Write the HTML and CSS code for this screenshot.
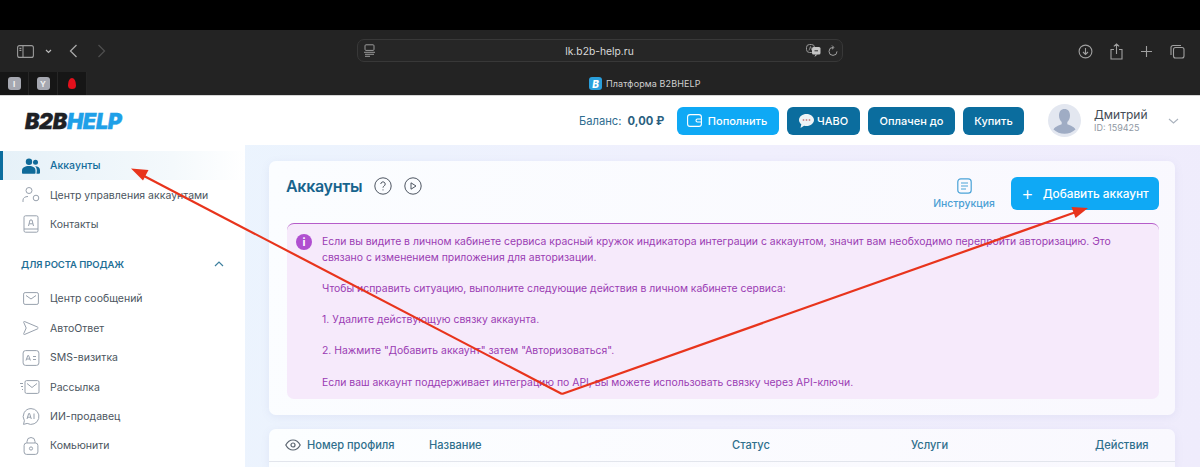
FILE: index.html
```html
<!DOCTYPE html>
<html lang="ru">
<head>
<meta charset="utf-8">
<title>Платформа B2BHELP</title>
<link rel="stylesheet" href="styles.css">
</head>
<body>
<div class="page">
  <div class="notch"></div>
  <div class="browser">
    <div class="toolbar">
      <div class="tool-left">
        <svg class="ic-side" width="17" height="13" viewBox="0 0 17 13" fill="none" stroke="#9a9a9a" stroke-width="1.1"><rect x=".6" y=".6" width="15.8" height="11.8" rx="2"/><path d="M6 .6v11.8M2.4 3.4h2M2.4 5.4h2"/></svg>
        <svg class="ic-down" width="7" height="5" viewBox="0 0 7 5" fill="none" stroke="#bbb" stroke-width="1.2"><path d="M1 1l2.5 2.5L6 1"/></svg>
        <svg class="ic-back" width="9" height="14" viewBox="0 0 9 14" fill="none" stroke="#a8a8a8" stroke-width="1.3"><path d="M7.5 1L1.5 7l6 6"/></svg>
        <svg class="ic-fwd" width="9" height="14" viewBox="0 0 9 14" fill="none" stroke="#4e4e4e" stroke-width="1.3"><path d="M1.5 1l6 6-6 6"/></svg>
      </div>
      <div class="urlbar">
        <svg width="11" height="13" viewBox="0 0 11 13" fill="none" stroke="#999" stroke-width="1"><rect x="1" y=".8" width="9" height="5.6" rx="1"/><path d="M0 8.3h11M1 10.3h9M1 12.3h5"/></svg>
        <span class="url">lk.b2b-help.ru</span>
        <svg width="15" height="13" viewBox="0 0 15 13"><rect x=".5" y=".5" width="8" height="8" rx="3" fill="none" stroke="#999"/><path d="M3 6.500L4.500 2.500 6 6.500" fill="none" stroke="#999" stroke-width=".8"/><rect x="6" y="3" width="8.500" height="7.500" rx="1.500" fill="#c4c4c4"/><path d="M8.500 13l1-2.500h2z" fill="#c4c4c4"/><path d="M8.500 6.800h3.500" stroke="#333" stroke-width="1"/></svg>
        <svg class="ic-reload" width="10" height="12" viewBox="0 0 10 12" fill="none" stroke="#a0a0a0" stroke-width="1"><path d="M5 2.400a4 4 0 1 0 4 4"/><path d="M4 .5l2 2-2 1.700"/></svg>
      </div>
      <div class="tool-right">
        <svg width="15" height="15" viewBox="0 0 15 15" fill="none" stroke="#a0a0a0" stroke-width="1.1"><circle cx="7.5" cy="7.5" r="6.4"/><path d="M7.5 4v6.5M5 8l2.500 2.500L10 8"/></svg>
        <svg width="13" height="17" viewBox="0 0 13 17" fill="none" stroke="#a0a0a0" stroke-width="1.1"><path d="M6.500 1v10M3.800 3.400L6.500 1l2.700 2.400M4 6.500H1v9.500h11V6.500H9"/></svg>
        <svg width="13" height="13" viewBox="0 0 13 13" fill="none" stroke="#a0a0a0" stroke-width="1.1"><path d="M6.500 1v11M1 6.500h11"/></svg>
        <svg width="15" height="15" viewBox="0 0 15 15" fill="none" stroke="#a0a0a0" stroke-width="1.1"><rect x="3.500" y="3.500" width="10.500" height="10.500" rx="2"/><path d="M11 1.500H3a2 2 0 0 0-2 2V11"/></svg>
      </div>
    </div>
    <div class="tabs">
      <div class="pins">
        <div class="pin"><span class="fav">I</span></div>
        <div class="pin"><span class="fav">Y</span></div>
        <div class="pin"><span class="drop"></span></div>
      </div>
      <div class="tab-title"><span class="tab-b">B</span><span>Платформа B2BHELP</span></div>
    </div>
  </div>

  <header class="header">
    <div class="logo">B2B<span>HELP</span></div>
    <div class="balance">Баланс: <b>0,00 ₽</b></div>
    <button class="btn btn-light">
      <svg width="15" height="13" viewBox="0 0 15 13" fill="none" stroke="#fff" stroke-width="1.1"><rect x=".6" y=".6" width="13.800" height="11.800" rx="2.500"/><path d="M14 5h-3.500a1.500 1.500 0 0 0 0 3H14"/></svg>
      Пополнить
    </button>
    <button class="btn btn-dark">
      <svg width="15" height="14" viewBox="0 0 15 14"><path d="M7.500 0C3.400 0 0 2.600 0 6c0 1.700.9 3.200 2.300 4.300L1.500 14l3.600-2.300c.8.200 1.600.300 2.400.300 4.100 0 7.500-2.700 7.500-6S11.600 0 7.500 0z" fill="#eef3f6"/><circle cx="4.500" cy="6" r=".9" fill="#c98a8a"/><circle cx="7.500" cy="6" r=".9" fill="#c98a8a"/><circle cx="10.500" cy="6" r=".9" fill="#c98a8a"/></svg>
      ЧАВО
    </button>
    <button class="btn btn-dark">Оплачен до</button>
    <button class="btn btn-dark">Купить</button>
    <div class="avatar">
      <svg width="33" height="33" viewBox="0 0 33 33"><circle cx="16.500" cy="16.500" r="16.500" fill="#e3e7f0"/><path d="M16.500 5c-3.500 0-5.500 2.700-5.500 6.500 0 2.800 1.100 5.100 2.700 6.400v2.300c-3.500 1.500-7 2.500-8.200 5.300a16.500 16.500 0 0 0 22 0c-1.200-2.800-4.700-3.800-8.200-5.300v-2.300c1.600-1.300 2.700-3.600 2.700-6.400C22 7.700 20 5 16.500 5z" fill="#9facc4"/></svg>
    </div>
    <div class="user">
      <div class="user-name">Дмитрий</div>
      <div class="user-id">ID: 159425</div>
    </div>
    <svg class="user-chev" width="11" height="6" viewBox="0 0 11 6" fill="none" stroke="#aab2bd" stroke-width="1.1"><path d="M1 1l4.500 4L10 1"/></svg>
  </header>

  <div class="body">
    <aside class="sidebar">
      <nav class="nav">
        <a class="item active">
          <svg width="18" height="16" viewBox="0 0 18 16" fill="#0f6a99"><circle cx="7" cy="3.700" r="3.200"/><circle cx="13.500" cy="4.300" r="2.500"/><path d="M0 15v-2.500C0 9.500 3 8 7 8s6.500 1.500 6.500 4.500V15a.8.800 0 0 1-.8.800H.8A.8.800 0 0 1 0 15z"/><path d="M14.500 15.800H17a1 1 0 0 0 1-1V12c0-2.300-2-3.700-5-3.700 1.300 1 1.800 2.500 1.800 4.200z"/></svg>
          <span>Аккаунты</span>
        </a>
        <a class="item">
          <svg width="18" height="16" viewBox="0 0 18 16" fill="none" stroke="#98a1ad" stroke-width="1"><circle cx="7" cy="3.500" r="3"/><path d="M1 15v-2c0-2 2-3.500 5-3.500"/><circle cx="14" cy="11" r="2.800"/></svg>
          <span>Центр управления аккаунтами</span>
        </a>
        <a class="item">
          <svg width="16" height="18" viewBox="0 0 16 18" fill="none" stroke="#98a1ad" stroke-width="1"><rect x="1" y=".8" width="14" height="16.400" rx="1.500"/><path d="M1 14h14M5.500 11l1.500-6h2l1.500 6M6.200 8.800h3.600"/></svg>
          <span>Контакты</span>
        </a>
        <div class="section"><span>ДЛЯ РОСТА ПРОДАЖ</span>
          <svg width="10" height="6" viewBox="0 0 10 6" fill="none" stroke="#3d7f9e" stroke-width="1.200"><path d="M1 5l4-4 4 4"/></svg>
        </div>
        <a class="item">
          <svg width="16" height="13" viewBox="0 0 16 13" fill="none" stroke="#98a1ad" stroke-width="1"><rect x=".6" y=".6" width="14.800" height="11.800" rx="1.500"/><path d="M3 3.500l5 3.500 5-3.500"/></svg>
          <span>Центр сообщений</span>
        </a>
        <a class="item">
          <svg width="16" height="16" viewBox="0 0 16 16" fill="none" stroke="#98a1ad" stroke-width="1"><path d="M1.500 1.500l13 5.500c.8.400.8 1.500 0 1.900l-13 5.600c-.6.200-1-.300-.8-.8L3.200 8 .7 2.300c-.2-.5.200-1 .8-.8z"/></svg>
          <span>АвтоОтвет</span>
        </a>
        <a class="item">
          <svg width="17" height="16" viewBox="0 0 17 16" fill="none" stroke="#98a1ad" stroke-width="1"><rect x=".6" y=".6" width="15.800" height="14.800" rx="2.500"/><path d="M3.500 10.500L5.300 5.500h.8l1.800 5M4.200 9h3.400M10.500 6.500h3M10.500 9.500h3"/></svg>
          <span>SMS-визитка</span>
        </a>
        <a class="item item-mail">
          <svg width="20" height="14" viewBox="0 0 20 14" fill="none" stroke="#98a1ad" stroke-width="1"><rect x="5" y=".6" width="14" height="12.800" rx="1.500"/><path d="M7 3.500l5 4 5-4M0 3.500h3M1 6.500h2M2 9.500h1"/></svg>
          <span>Рассылка</span>
        </a>
        <a class="item">
          <svg width="17" height="17" viewBox="0 0 17 17" fill="none" stroke="#98a1ad" stroke-width="1"><path d="M8.500.6a7.900 7.900 0 1 1-3.800 14.800L1 16.400l.9-3.700A7.900 7.900 0 0 1 8.500.6z"/><path d="M4.500 11l1.700-5.500h.9L8.800 11M5.100 9.200h3.200M11.500 5.500V11"/></svg>
          <span>ИИ-продавец</span>
        </a>
        <a class="item">
          <svg width="15" height="18" viewBox="0 0 15 18" fill="none" stroke="#98a1ad" stroke-width="1"><rect x=".6" y="6" width="13.800" height="11.400" rx="2.500"/><path d="M3.500 6V4.500a4 4 0 0 1 8 0V6"/><circle cx="7.500" cy="11.500" r="1.600"/></svg>
          <span>Комьюнити</span>
        </a>
      </nav>
    </aside>

    <main class="main">
      <section class="card">
        <div class="card-top">
          <h1 class="title">Аккаунты</h1>
          <svg class="ic-q" width="18" height="18" viewBox="0 0 18 18" fill="none" stroke="#4d5561" stroke-width="1"><circle cx="9" cy="9" r="8.200"/><path d="M6.800 7a2.200 2.200 0 1 1 3.400 1.900c-.8.500-1.200.9-1.200 1.800M9 12.400v1"/></svg>
          <svg class="ic-p" width="18" height="18" viewBox="0 0 18 18" fill="none" stroke="#4d5561" stroke-width="1"><circle cx="9" cy="9" r="8.200"/><path d="M7 5.800l5 3.200-5 3.200z" stroke-linejoin="round"/></svg>
          <div class="guide">
            <svg width="15" height="16" viewBox="0 0 15 16" fill="none" stroke="#4ba3d8" stroke-width="1.200"><rect x=".8" y=".8" width="13.400" height="14.400" rx="3"/><path d="M4 5h7M4 8h7M4 11h5"/></svg>
            <span>Инструкция</span>
          </div>
          <button class="add"><span class="plus">+</span>Добавить аккаунт</button>
        </div>
        <div class="alert">
          <span class="alert-i">i</span>
          <div class="alert-text">
            <p>Если вы видите в личном кабинете сервиса красный кружок индикатора интеграции с аккаунтом, значит вам необходимо перепройти авторизацию. Это связано с изменением приложения для авторизации.</p>
            <p>Чтобы исправить ситуацию, выполните следующие действия в личном кабинете сервиса:</p>
            <p>1. Удалите действующую связку аккаунта.</p>
            <p>2. Нажмите "Добавить аккаунт" затем "Авторизоваться".</p>
            <p>Если ваш аккаунт поддерживает интеграцию по API, вы можете использовать связку через API-ключи.</p>
          </div>
        </div>
      </section>
      <section class="table-card">
        <div class="th-row">
          <svg width="16" height="12" viewBox="0 0 16 12" fill="none" stroke="#5a6470" stroke-width="1.200"><path d="M.8 6C2.500 2.800 5 1 8 1s5.500 1.800 7.200 5C13.500 9.200 11 11 8 11S2.500 9.200.8 6z"/><circle cx="8" cy="6" r="2"/></svg>
          <span class="th th-num">Номер профиля</span>
          <span class="th th-name">Название</span>
          <span class="th th-status">Статус</span>
          <span class="th th-serv">Услуги</span>
          <span class="th th-act">Действия</span>
        </div>
      </section>
    </main>
  </div>

  <svg class="arrows" width="1200" height="467" viewBox="0 0 1200 467" fill="#e8341c">
    <path d="M562 394L144 176" stroke="#e8341c" stroke-width="2.200" fill="none"/>
    <path d="M131 168.500l17.500 1.500-5.500 10.500z"/>
    <path d="M562 394L1076 212" stroke="#e8341c" stroke-width="2.200" fill="none"/>
    <path d="M1088 208l-12.500 10-4-11z"/>
  </svg>
</div>
</body>
</html>
```
FILE: styles.css
```css
* { box-sizing: border-box; }
html, body { margin: 0; padding: 0; }
body { width: 1200px; height: 467px; overflow: hidden; font-family: "Inter", "Noto Sans", sans-serif; background: #fff; }
.page { position: relative; width: 1200px; height: 467px; overflow: hidden; display: flex; flex-direction: column; }
.notch { height: 30px; background: #000; flex: none; }

.browser { height: 66px; background: #232323; flex: none; border-bottom: 1px solid #d5d5d5; display: flex; flex-direction: column; }
.toolbar { height: 42px; padding-top: 8px; display: flex; align-items: flex-start; flex: none; }
.tool-left { width: 357px; height: 26px; display: flex; align-items: center; padding-left: 17px; flex: none; }
.ic-down { margin-left: 11px; }
.ic-back { margin-left: 17px; }
.ic-fwd { margin-left: 19px; }
.urlbar { width: 486px; height: 23px; margin-top: 1px; border: 1px solid #383838; border-radius: 7px; background: #262626; display: flex; align-items: center; padding: 0 4px 0 6px; flex: none; }
.url { flex: 1; text-align: center; font-size: 10.300px; color: #d8d8d8; padding-left: 18px; }
.ic-reload { margin-left: 7px; }
.tool-right { flex: 1; height: 26px; display: flex; align-items: center; padding-left: 235px; gap: 17px; }
.tabs { height: 23px; display: flex; align-items: stretch; }
.pins { width: 87px; display: flex; background: #161616; flex: none; }
.pin { width: 29px; display: flex; align-items: center; justify-content: center; border-right: 1px solid #262626; }
.fav { width: 13px; height: 13px; border-radius: 3px; background: #a5a7b0; color: #f2f2f2; font-size: 8px; font-weight: 700; display: flex; align-items: center; justify-content: center; }
.drop { width: 8px; height: 11px; border-radius: 50% 50% 50% 50% / 65% 65% 35% 35%; background: #e3101c; }
.tab-title { display: flex; align-items: center; gap: 4px; margin-left: 502px; font-size: 9px; color: #cfcfcf; letter-spacing: .1px; }
.tab-b { width: 13px; height: 13px; border-radius: 3px; background: #2a9fdc; color: #fff; font-size: 10px; font-weight: 800; font-style: italic; display: flex; align-items: center; justify-content: center; }

.header { height: 49px; flex: none; display: flex; align-items: center; background: #fff; padding-left: 25px; }
.logo { width: 98px; font-size: 21.500px; line-height: 20px; font-weight: 900; font-style: italic; color: #1e2126; letter-spacing: -.25px; -webkit-text-stroke: .4px; flex: none; }
.logo span { color: #1fa0e8; }
.balance { margin-left: 456px; width: 98px; font-size: 11.200px; color: #2f6d90; flex: none; }
.balance b { margin-left: 3px; font-weight: 700; color: #2a5f80; }
.btn { height: 28px; border: 0; border-radius: 6px; display: flex; align-items: center; justify-content: center; white-space: nowrap; font-family: inherit; font-size: 11px; font-weight: 500; color: #fff; padding: 0; flex: none; margin-right: 8px; }
.btn-light { background: #0fa9f5; width: 102px; gap: 6px; padding-right: 2px; }
.btn-dark { background: #0b6d9e; gap: 3px; }
.btn-dark:nth-of-type(2) { width: 73px; }
.btn-dark:nth-of-type(3) { width: 87px; }
.btn-dark:nth-of-type(4) { width: 61px; margin-right: 24px; }
.avatar { width: 33px; height: 33px; flex: none; }
.avatar svg { display: block; }
.user { margin-left: 13px; width: 74px; flex: none; }
.user-name { font-size: 12px; line-height: 14px; color: #444b55; }
.user-id { font-size: 9px; line-height: 12px; color: #8f98a3; }
.user-chev { flex: none; }

.body { flex: 1; display: flex; min-height: 0; background: linear-gradient(100deg, #e9f6fe 0%, #f0effd 60%, #efecfc 100%); }
.sidebar { width: 245px; flex: none; background: #fff; padding-top: 6px; }
.nav { display: flex; flex-direction: column; }
.item { height: 29.400px; display: flex; align-items: center; padding-left: 22px; font-size: 10.500px; color: #4b5560; position: relative; flex: none; }
.item svg { width: 18px; flex: none; margin-right: 10px; }
.item.item-mail svg { margin-left: -2px; width: 20px; }
.active { color: #146d9c; font-weight: 500; background: linear-gradient(90deg, #e6f1f8 0%, #f4f9fc 70%, #fff 100%); border-left: 3px solid #0b6d9e; padding-left: 19px; }
.section { height: 45px; padding: 5px 21px 0; display: flex; align-items: center; justify-content: space-between; font-size: 9.500px; font-weight: 600; color: #1f6f96; letter-spacing: -.1px; flex: none; }

.main { flex: 1; padding: 16px 25px 0 24px; display: flex; flex-direction: column; gap: 14px; min-width: 0; }
.card { height: 254px; flex: none; background: linear-gradient(100deg, #fbfdff, #f9f8fe); border-radius: 7px; box-shadow: 0 2px 8px rgba(120, 130, 190, .10); padding: 16px 16px 16px 17px; }
.card-top { height: 46px; display: flex; align-items: flex-start; }
.title { margin: 0; font-size: 16px; line-height: 19px; font-weight: 600; letter-spacing: -.3px; color: #17648d; }
.ic-q { margin-left: 12px; flex: none; }
.ic-p { margin-left: 12px; flex: none; }
.guide { margin-left: auto; width: 62px; display: flex; flex-direction: column; align-items: center; gap: 3px; margin-top: 1px; font-size: 10.400px; color: #4b9fd4; font-weight: 500; flex: none; }
.add { width: 148px; height: 33px; margin-left: 16px; border: 0; border-radius: 6px; background: #0fa9f5; color: #fff; font-family: inherit; font-size: 11.800px; font-weight: 500; display: flex; align-items: center; justify-content: center; gap: 9px; flex: none; }
.plus { font-size: 19px; font-weight: 300; line-height: 1; }
.alert { height: 176px; margin-left: 1px; background: #f6eafb; border-top: 1px solid #b55cc9; border-radius: 7px; display: flex; padding: 10px 16px 0 9px; }
.alert-i { width: 16px; height: 16px; border-radius: 50%; background: #b04fd0; color: #fff; font-size: 11px; font-weight: 700; display: flex; align-items: center; justify-content: center; flex: none; margin-right: 10px; }
.alert-text { font-size: 10.420px; line-height: 15.500px; color: #9a3cb3; }
.alert-text p { margin: 0 0 15.800px; }

.table-card { flex: 1; background: linear-gradient(100deg, #fcfeff, #f9f8fe); border-radius: 7px 7px 0 0; box-shadow: 0 2px 8px rgba(120, 130, 190, .10); }
.th-row { height: 33px; display: flex; align-items: center; padding-left: 16px; border-bottom: 1px solid #e2e5ec; font-size: 11.100px; color: #2f6f8c; font-weight: 500; }
.th { flex: none; }
.th-num { margin-left: 6px; width: 122px; }
.th-name { width: 303px; }
.th-status { width: 179px; }
.th-serv { width: 184px; }

.arrows { position: absolute; left: 0; top: 0; pointer-events: none; }
```
